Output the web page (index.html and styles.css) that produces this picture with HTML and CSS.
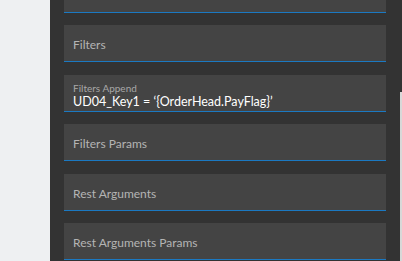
FILE: index.html
```html
<!DOCTYPE html>
<html lang="en">
<head>
    <meta charset="UTF-8">
    <meta name="viewport" content="width=device-width, initial-scale=1.0">
    <title>Rest Settings</title>
    <link rel="stylesheet" href="styles.css">
</head>
<body>
    <div class="layout">
        <div class="side"></div>
        <div class="panel">
            <div class="fields">
                <div class="field"></div>
                <div class="field"><span class="label">Filters</span></div>
                <div class="field filled">
                    <span class="label">Filters Append</span>
                    <span class="value">UD04_Key1 = ‘{OrderHead.PayFlag}’</span>
                </div>
                <div class="field"><span class="label">Filters Params</span></div>
                <div class="field"><span class="label">Rest Arguments</span></div>
                <div class="field"><span class="label">Rest Arguments Params</span></div>
            </div>
        </div>
        <div class="scroll"><div class="thumb"></div></div>
    </div>
</body>
</html>
```

FILE: styles.css
```css
body {
    margin: 0;
    font-family: Lato, "Open Sans", sans-serif;
    background-color: #eef0f2;
    overflow: hidden;
}
.layout {
    display: flex;
    height: 261px;
}
.side {
    width: 50px;
    background-color: #eef0f2;
}
.panel {
    width: 350px;
    background-color: #333333;
    padding: 0 14px;
    box-sizing: border-box;
    overflow: hidden;
}
.fields {
    display: flex;
    flex-direction: column;
    margin-top: -24px;
}
.field {
    flex: none;
    background-color: #444444;
    border-bottom: 1px solid #1b79c2;
    padding: 3px 9px 0;
    box-sizing: content-box;
    height: 33px;
    display: flex;
    flex-direction: column;
    justify-content: center;
    margin-bottom: 13px;
}
.field:nth-child(odd) {
    margin-bottom: 12px;
}
.label {
    color: #b4b4b4;
    font-size: 12px;
}
.filled {
    justify-content: flex-start;
    padding-top: 7px;
    height: 29px;
}
.filled .label {
    font-size: 10px;
    line-height: 12px;
    color: #a8a8a8;
}
.filled .value {
    color: #ffffff;
    font-size: 12.5px;
    line-height: 15px;
}
.scroll {
    width: 2px;
    background-color: #333333;
}
.thumb {
    margin-top: 92px;
    height: 169px;
    background-color: #d8d8d8;
}
```
